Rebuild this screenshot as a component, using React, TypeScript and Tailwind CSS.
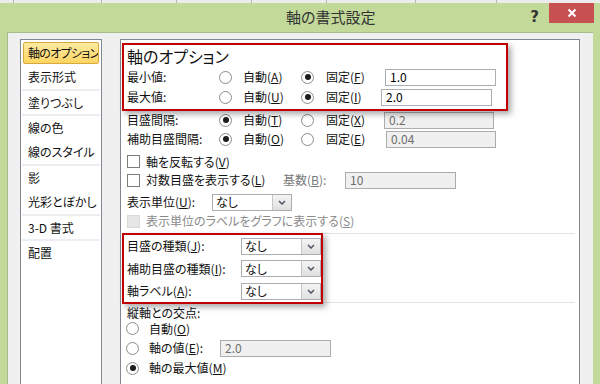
import React from "react";

function Key({ t, k, s = "" }: { t: string; k: string; s?: string }) {
  return (
    <span className="whitespace-nowrap">
      {t}(<span className="underline underline-offset-[1px]">{k}</span>){s}
    </span>
  );
}

function Radio({ on }: { on?: boolean }) {
  return (
    <span className="w-[13px] h-[13px] rounded-full border border-[#8c8c8c] bg-white flex items-center justify-center shrink-0">
      {on && <span className="w-[6px] h-[6px] rounded-full bg-[#1c1c1c]" />}
    </span>
  );
}

function Check({ disabled }: { disabled?: boolean }) {
  return disabled ? (
    <span className="w-[13px] h-[13px] border border-[#d9d9d9] bg-[#e6e6e6] shrink-0" />
  ) : (
    <span className="w-[13px] h-[13px] border border-[#7d7d7d] bg-white shrink-0" />
  );
}

function Field({ value, disabled, className }: { value: string; disabled?: boolean; className: string }) {
  return (
    <div
      className={
        "h-[17px] border flex items-center pl-[4px] " +
        (disabled ? "bg-[#f0f0f0] border-[#adadad] text-[#6d6d6d] " : "bg-white border-[#abadb3] text-black ") +
        className
      }
    >
      {value}
    </div>
  );
}

function Select() {
  return (
    <div className="flex h-[17px] w-[80px] border border-[#abadb3] bg-white shrink-0">
      <span className="flex-1 pl-[3px] flex items-center">なし</span>
      <span className="w-[19px] border-l border-[#c6c6c6] bg-linear-to-b from-[#f4f4f4] to-[#e0e0e0] flex items-center justify-center">
        <svg width="8" height="5" viewBox="0 0 8 5">
          <path d="M1 1 L4 4 L7 1" fill="none" stroke="#4f5866" strokeWidth="1.5" />
        </svg>
      </span>
    </div>
  );
}

function OptRow({
  label,
  a,
  b,
  autoOn,
  value,
  disabled,
  fieldClass,
  h,
  pl,
}: {
  label: string;
  a: React.ReactNode;
  b: React.ReactNode;
  autoOn: boolean;
  value: string;
  disabled?: boolean;
  fieldClass: string;
  h: string;
  pl: string;
}) {
  return (
    <div className={"flex items-center " + h + " " + pl}>
      <span className="w-[92px] shrink-0">{label}</span>
      <div className="w-[82px] flex items-center shrink-0">
        <Radio on={autoOn} />
        <span className="ml-[11px]">{a}</span>
      </div>
      <div className="w-[84px] flex items-center shrink-0">
        <Radio on={!autoOn} />
        <span className="ml-[12px]">{b}</span>
      </div>
      <Field value={value} disabled={disabled} className={fieldClass} />
    </div>
  );
}

const listItems = [
  { t: "表示形式", sep: false },
  { t: "塗りつぶし", sep: true },
  { t: "線の色", sep: true },
  { t: "線のスタイル", sep: false },
  { t: "影", sep: true },
  { t: "光彩とぼかし", sep: false },
  { t: "3-D 書式", sep: true },
  { t: "配置", sep: true },
];

export default function App() {
  return (
    <div className="w-[600px] h-[384px] overflow-hidden bg-[#c2d99a] flex flex-col font-['Noto_Sans_CJK_JP',sans-serif] [font-feature-settings:'palt'] text-[12px] text-[#111]">
      {/* spreadsheet behind */}
      <div className="h-[3px] flex bg-[#ececec] shrink-0">
        <div className="w-[14px] border-r border-[#b4b4b4]" />
        <div className="w-[88px] border-r border-[#b4b4b4]" />
        <div className="w-[75px] border-r border-[#b4b4b4]" />
        <div className="w-[75px] border-r border-[#b4b4b4]" />
        <div className="w-[75px] border-r border-[#b4b4b4]" />
        <div className="w-[89px] border-r border-[#b4b4b4]" />
        <div className="w-[81px] border-r border-[#b4b4b4]" />
      </div>

      {/* title bar */}
      <div className="h-[29px] flex items-center shrink-0">
        <span className="pl-[286px] text-[15px] text-[#333]">軸の書式設定</span>
        <span className="ml-auto self-start mt-[3px] text-[15px] font-bold text-[#333] font-['DejaVu_Sans',sans-serif]">?</span>
        <div className="self-start ml-[10px] mr-[6px] w-[45px] h-[20px] bg-[#c75050] flex items-center justify-center">
          <svg width="10" height="10" viewBox="0 0 10 10">
            <path d="M1.5 1.5 L8.5 8.5 M8.5 1.5 L1.5 8.5" stroke="#fff" strokeWidth="2" />
          </svg>
        </div>
      </div>

      {/* body */}
      <div className="flex-1 mx-[7px] bg-[#f0f0f0] border-t border-l border-[#a7ba8c] flex pt-[6px]">
        {/* category list */}
        <div className="ml-[12px] w-[82px] border border-b-0 border-[#828790] bg-white">
          <div className="mt-[2px] mx-[2px] h-[22px] rounded-[2px] border border-[#d9a83f] bg-linear-to-b from-[#ffea9e] to-[#fdd561] pl-[4px] flex items-center whitespace-nowrap tracking-[-0.7px] overflow-hidden">
            軸のオプション
          </div>
          {listItems.map((it) => (
            <div
              key={it.t}
              className={
                "mx-[1px] h-[25px] pl-[6px] flex items-center whitespace-nowrap " +
                (it.sep ? "border-t-2 border-[#ededf2]" : "")
              }
            >
              {it.t}
            </div>
          ))}
        </div>

        {/* options panel */}
        <div className="ml-[18px] w-[460px] border border-b-0 border-[#828790] bg-white flex flex-col pt-[3px]">
          <div className="ml-px w-[386px] h-[68px] border-2 border-[#c00000] bg-white shadow-[3px_3px_6px_rgba(0,0,0,0.35)] relative z-10">
            <div className="h-[22px] pl-[3px] flex items-center text-[16px]">軸のオプション</div>
            <OptRow
              label="最小値:"
              a={<Key t="自動" k="A" />}
              b={<Key t="固定" k="F" />}
              autoOn={false}
              value="1.0"
              fieldClass="w-[111px]"
              h="h-[20px]"
              pl="pl-[3px]"
            />
            <OptRow
              label="最大値:"
              a={<Key t="自動" k="U" />}
              b={<Key t="固定" k="I" />}
              autoOn={false}
              value="2.0"
              fieldClass="w-[111px] -ml-[4px]"
              h="h-[20px]"
              pl="pl-[3px]"
            />
          </div>

          <OptRow
            label="目盛間隔:"
            a={<Key t="自動" k="T" />}
            b={<Key t="固定" k="X" />}
            autoOn={true}
            value="0.2"
            disabled
            fieldClass="w-[110px] -ml-px"
            h="h-[18px]"
            pl="pl-[6px]"
          />
          <OptRow
            label="補助目盛間隔:"
            a={<Key t="自動" k="O" />}
            b={<Key t="固定" k="E" />}
            autoOn={true}
            value="0.04"
            disabled
            fieldClass="w-[110px] ml-px"
            h="h-[20px]"
            pl="pl-[6px]"
          />

          <div className="mt-[3px] h-[19px] pl-[6px] flex items-center">
            <Check />
            <span className="ml-[6px]">
              <Key t="軸を反転する" k="V" />
            </span>
          </div>
          <div className="h-[18px] pl-[6px] flex items-center">
            <div className="w-[156px] flex items-center shrink-0">
              <Check />
              <span className="ml-[6px]">
                <Key t="対数目盛を表示する" k="L" />
              </span>
            </div>
            <span className="w-[62px] text-[#777] shrink-0">
              <Key t="基数" k="B" s=":" />
            </span>
            <Field value="10" disabled className="w-[111px]" />
          </div>
          <div className="mt-[3px] h-[20px] pl-[6px] flex items-center">
            <span className="w-[85px] shrink-0">
              <Key t="表示単位" k="U" s=":" />
            </span>
            <Select />
          </div>
          <div className="h-[18px] pl-[6px] flex items-center text-[#8a8a8a]">
            <Check disabled />
            <span className="ml-[6px]">
              <Key t="表示単位のラベルをグラフに表示する" k="S" />
            </span>
          </div>

          {/* tick marks section */}
          <div className="mt-[3px] ml-px mr-[4px] flex">
            <div className="w-[201px] h-[71px] border-2 border-[#c00000] bg-white shadow-[3px_3px_6px_rgba(0,0,0,0.35)] relative z-10 shrink-0">
              <div className="h-[22px] pl-[3px] flex items-center">
                <span className="w-[114px] shrink-0">
                  <Key t="目盛の種類" k="J" s=":" />
                </span>
                <Select />
              </div>
              <div className="h-[23px] pl-[3px] flex items-center">
                <span className="w-[114px] shrink-0">
                  <Key t="補助目盛の種類" k="I" s=":" />
                </span>
                <Select />
              </div>
              <div className="h-[22px] pl-[3px] flex items-center">
                <span className="w-[114px] shrink-0">
                  <Key t="軸ラベル" k="A" s=":" />
                </span>
                <Select />
              </div>
            </div>
            <div className="flex-1 border-t border-b border-[#e2e2e2] mb-px" />
          </div>

          {/* crossing */}
          <div className="mt-px h-[15px] pl-[6px] flex items-center">縦軸との交点:</div>
          <div className="h-[17px] pl-[5px] flex items-center">
            <Radio />
            <span className="ml-[10px]">
              <Key t="自動" k="O" />
            </span>
          </div>
          <div className="mt-px h-[20px] pl-[5px] flex items-center">
            <div className="w-[94px] flex items-center shrink-0">
              <Radio />
              <span className="ml-[10px]">
                <Key t="軸の値" k="E" s=":" />
              </span>
            </div>
            <Field value="2.0" disabled className="w-[111px]" />
          </div>
          <div className="h-[20px] pl-[5px] flex items-center">
            <Radio on />
            <span className="ml-[10px]">
              <Key t="軸の最大値" k="M" />
            </span>
          </div>
        </div>
      </div>
    </div>
  );
}
